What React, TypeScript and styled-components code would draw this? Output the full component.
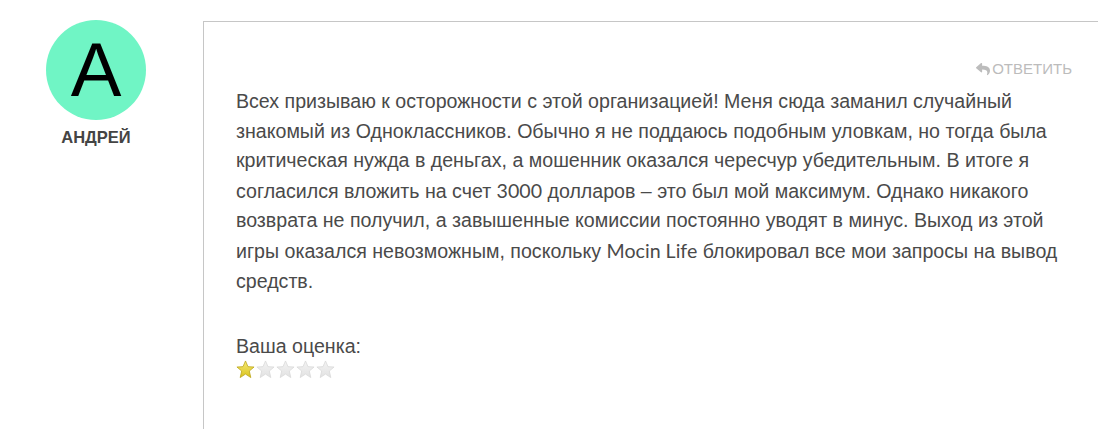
import React from "react";
import styled, { createGlobalStyle } from "styled-components";
import { FaReply } from "react-icons/fa";

const GlobalStyle = createGlobalStyle`
  html, body {
    margin: 0;
    padding: 0;
    background: #fff;
  }
  body {
    font-family: "Liberation Sans", Arial, sans-serif;
  }
`;

const Comment = styled.div`
  display: flex;
  align-items: flex-start;
  gap: 11px;
  padding-top: 20px;
`;

const Author = styled.div`
  width: 192px;
  display: flex;
  flex-direction: column;
  align-items: center;
`;

const Avatar = styled.div`
  width: 100px;
  height: 100px;
  border-radius: 50%;
  background: #70f5c5;
  color: #000;
  display: flex;
  align-items: center;
  justify-content: center;
  font-family: "Liberation Sans", Arial, sans-serif;
  font-size: 76px;
  line-height: 1;
`;

const Name = styled.div`
  margin-top: 8px;
  font-size: 16.5px;
  font-weight: 700;
  color: #444;
  text-transform: uppercase;
`;

const Card = styled.div`
  flex: 1;
  min-height: 409px;
  margin-top: 1px;
  border-top: 1px solid #c6c6c6;
  border-left: 1px solid #c6c6c6;
  padding: 38px 26px 0 32px;
  box-sizing: border-box;
`;

const ReplyRow = styled.div`
  display: flex;
  justify-content: flex-end;
`;

const Reply = styled.a`
  display: inline-flex;
  align-items: center;
  gap: 2px;
  color: #bcbcbc;
  font-size: 15px;
  text-transform: uppercase;
  text-decoration: none;
  cursor: pointer;
`;

const Text = styled.p`
  margin: 10px 0 0;
  font-size: 19.6px;
  line-height: 29.6px;
  color: #4a4a4a;
`;

const Latin = styled.span`
  font-family: Lato, "Liberation Sans", sans-serif;
`;

const Rating = styled.div`
  margin-top: 39px;
  color: #4a4a4a;
  font-size: 19.6px;
`;

const Stars = styled.div`
  display: flex;
  gap: 1px;
  margin-top: 2px;
`;

const Star: React.FC<{ on: boolean }> = ({ on }) => (
  <svg width="19" height="19" viewBox="0 0 20 20">
    <defs>
      <linearGradient id={on ? "starOn" : "starOff"} x1="0" y1="0" x2="0" y2="1">
        <stop offset="0" stopColor={on ? "#f6ea73" : "#f3f3f3"} />
        <stop offset="1" stopColor={on ? "#d9c21e" : "#e2e2e2"} />
      </linearGradient>
    </defs>
    <polygon
      points="10,1 12.6,7 19,7.4 14,11.6 15.6,18.5 10,14.8 4.4,18.5 6,11.6 1,7.4 7.4,7"
      fill={`url(#${on ? "starOn" : "starOff"})`}
      stroke={on ? "#b9a312" : "#d8d8d8"}
      strokeWidth="0.8"
      strokeLinejoin="round"
    />
  </svg>
);

export default function App() {
  const rating = 1;
  return (
    <>
      <GlobalStyle />
      <Comment>
        <Author>
          <Avatar>A</Avatar>
          <Name>Андрей</Name>
        </Author>
        <Card>
          <ReplyRow>
            <Reply>
              <FaReply size={14} />
              Ответить
            </Reply>
          </ReplyRow>
          <Text>
            Всех призываю к осторожности с этой организацией! Меня сюда заманил случайный
            знакомый из Одноклассников. Обычно я не поддаюсь подобным уловкам, но тогда была
            критическая нужда в деньгах, а мошенник оказался чересчур убедительным. В итоге я
            согласился вложить на счет <Latin>3000</Latin> долларов – это был мой максимум. Однако никакого
            возврата не получил, а завышенные комиссии постоянно уводят в минус. Выход из этой
            игры оказался невозможным, поскольку <Latin>Mocin Life</Latin> блокировал все мои запросы на вывод
            средств.
          </Text>
          <Rating>
            Ваша оценка:
            <Stars>
              {[1, 2, 3, 4, 5].map((n) => (
                <Star key={n} on={n <= rating} />
              ))}
            </Stars>
          </Rating>
        </Card>
      </Comment>
    </>
  );
}
